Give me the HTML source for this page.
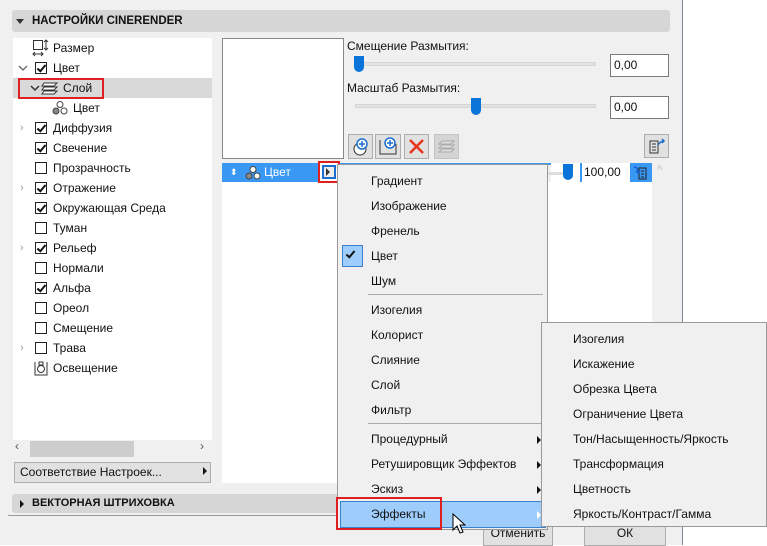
<!DOCTYPE html>
<html><head><meta charset="utf-8"><style>
*{margin:0;padding:0;box-sizing:border-box}
body{width:767px;height:545px;overflow:hidden;background:#fff;font-family:"Liberation Sans",sans-serif;font-size:12px;color:#111;position:relative}
.a{position:absolute}
.dlg{left:0;top:0;width:683px;height:545px;background:#f0f0f0;border-right:1px solid #7c8896}
.hdr{background:#d6d6d6;border-radius:3px;font-weight:bold;font-size:11.5px;line-height:22px}
.row{height:20px;line-height:20px;left:13px;width:199px}
.cb{position:absolute;left:22px;top:4px;width:12px;height:12px;border:1px solid #222;background:#fff}
.cb.k::after{content:"";position:absolute;left:3px;top:0px;width:3px;height:7px;border:solid #111;border-width:0 2px 2px 0;transform:rotate(40deg)}
.ch{position:absolute;left:7px;color:#999;font-size:11px}
.lbl{position:absolute;left:40px}
.tb{background:#fff;border:1px solid #7a7a7a;line-height:20px;padding-left:3px;font-size:12px}
.btn{border:1px solid #adadad;background:#e1e1e1}
.mi{position:absolute;left:33px;height:25px;line-height:25px}
.arr{position:absolute;left:199px;width:0;height:0;border-left:4px solid #111;border-top:4px solid transparent;border-bottom:4px solid transparent}
</style></head><body>
<div class="a dlg"></div>
<div class="a hdr" style="left:12px;top:10px;width:658px;height:22px;padding-left:20px">НАСТРОЙКИ CINERENDER</div>
<div class="a" style="left:16px;top:19px;border-top:5px solid #333;border-left:4px solid transparent;border-right:4px solid transparent"></div>

<div class="a" style="left:13px;top:38px;width:199px;height:402px;background:#fff"></div>
<div class="a" style="left:13px;top:78px;width:199px;height:20px;background:#d9d9d9"></div>
<div class="a row" style="top:38px"><svg class="a" style="left:19px;top:1px" width="18" height="18"><rect x="1.5" y="1.5" width="9" height="9" fill="none" stroke="#333"/><path d="M14 1v10M12 3l2-2 2 2M12 9l2 2 2-2M1 15h10M3 13l-2 2 2 2M9 13l2 2-2 2" stroke="#333" fill="none"/></svg><span class="lbl">Размер</span></div>
<div class="a row" style="top:58px"><svg class="a" style="left:5px;top:6px" width="10" height="10"><path d="M1 2l4 4 4-4" stroke="#666" stroke-width="1.3" fill="none"/></svg><div class="cb k"></div><span class="lbl">Цвет</span></div>
<div class="a row" style="top:78px"><svg class="a" style="left:17px;top:5px" width="10" height="10"><path d="M1 3l4 4 4-4" stroke="#333" stroke-width="1.5" fill="none"/></svg><svg class="a" style="left:28px;top:2px" width="18" height="16"><path d="M3 3h13l-3 3H1zM3 7h13l-3 3H1zM3 11h13l-3 3H1z" stroke="#333" fill="#fff"/></svg><span class="lbl" style="left:50px">Слой</span></div>
<div class="a" style="left:18px;top:78px;width:86px;height:21px;border:2px solid #e02020"></div>
<div class="a row" style="top:98px"><svg class="a" style="left:39px;top:2px" width="16" height="16"><circle cx="8" cy="4.5" r="3" fill="#fff" stroke="#444"/><circle cx="4" cy="11" r="3" fill="#888" stroke="#444"/><circle cx="12" cy="11" r="3" fill="#fff" stroke="#444"/></svg><span class="lbl" style="left:60px">Цвет</span></div>
<div class="a row" style="top:118px"><span class="ch">›</span><div class="cb k"></div><span class="lbl">Диффузия</span></div>
<div class="a row" style="top:138px"><div class="cb k"></div><span class="lbl">Свечение</span></div>
<div class="a row" style="top:158px"><div class="cb"></div><span class="lbl">Прозрачность</span></div>
<div class="a row" style="top:178px"><span class="ch">›</span><div class="cb k"></div><span class="lbl">Отражение</span></div>
<div class="a row" style="top:198px"><div class="cb k"></div><span class="lbl">Окружающая Среда</span></div>
<div class="a row" style="top:218px"><div class="cb"></div><span class="lbl">Туман</span></div>
<div class="a row" style="top:238px"><span class="ch">›</span><div class="cb k"></div><span class="lbl">Рельеф</span></div>
<div class="a row" style="top:258px"><div class="cb"></div><span class="lbl">Нормали</span></div>
<div class="a row" style="top:278px"><div class="cb k"></div><span class="lbl">Альфа</span></div>
<div class="a row" style="top:298px"><div class="cb"></div><span class="lbl">Ореол</span></div>
<div class="a row" style="top:318px"><div class="cb"></div><span class="lbl">Смещение</span></div>
<div class="a row" style="top:338px"><span class="ch">›</span><div class="cb"></div><span class="lbl">Трава</span></div>
<div class="a row" style="top:358px"><svg class="a" style="left:21px;top:2px" width="14" height="16"><path d="M1 2v13h12V2" stroke="#333" fill="none"/><circle cx="7" cy="9" r="3.5" fill="none" stroke="#333"/><rect x="5" y="2" width="4" height="3" fill="none" stroke="#333"/></svg><span class="lbl">Освещение</span></div>
<div class="a" style="left:13px;top:440px;width:199px;height:18px;background:#f0f0f0"></div>
<div class="a" style="left:30px;top:441px;width:104px;height:16px;background:#cdcdcd"></div>
<div class="a" style="left:15px;top:439px;color:#555">‹</div><div class="a" style="left:200px;top:439px;color:#555">›</div>
<div class="a btn" style="left:14px;top:462px;width:197px;height:21px;line-height:19px;padding-left:5px">Соответствие Настроек...</div>
<div class="arr" style="left:203px;top:467px"></div>

<div class="a" style="left:222px;top:38px;width:122px;height:121px;background:#fff;border:1px solid #888"></div>
<div class="a" style="left:222px;top:163px;width:430px;height:320px;background:#fff"></div>
<div class="a" style="left:222px;top:163px;width:112px;height:19px;background:#3a98f5;color:#fff;line-height:19px"><span class="a" style="left:8px;font-size:9px">⬍</span><svg class="a" style="left:23px;top:2px" width="16" height="16"><circle cx="8" cy="4.5" r="3" fill="#fff" stroke="#444"/><circle cx="4" cy="11" r="3" fill="#888" stroke="#444"/><circle cx="12" cy="11" r="3" fill="#fff" stroke="#444"/></svg><span class="a" style="left:42px">Цвет</span></div>
<div class="a" style="left:334px;top:163px;width:217px;height:19px;background:#f0f0f0;border-top:2px solid #3a98f5"></div>
<div class="a" style="left:547px;top:172px;width:23px;height:3px;background:#ddd"></div>
<div class="a" style="left:563px;top:164px;width:10px;height:16px;background:#0a74d8;border-radius:0 0 5px 5px"></div>
<div class="a" style="left:580px;top:163px;width:50px;height:19px;background:#fff;border-left:2px solid #3a98f5;line-height:19px;padding-left:2px">100,00</div>
<div class="a" style="left:630px;top:163px;width:22px;height:19px;background:#3a98f5"><svg width="22" height="19"><path d="M9 5h7v11H9zM11 8h3M11 11h3M11 14h3" stroke="#222" fill="none"/><path d="M4 4c3 0 4 2 4 5M6 8l2 2 2-2" stroke="#1a5fd0" stroke-width="1.5" fill="none"/></svg></div>
<div class="a" style="left:657px;top:164px;color:#bbb;font-size:11px">^</div>
<div class="a" style="left:318px;top:161px;width:22px;height:22px;border:2px solid #e02020;background:#fff"><div class="a" style="left:2px;top:2px;width:14px;height:14px;border:2px solid #1a6fd0;background:#eee"></div><div class="arr" style="left:6px;top:5px;border-left-color:#333"></div></div>

<div class="a" style="left:347px;top:39px">Смещение Размытия:</div>
<div class="a" style="left:355px;top:62px;width:241px;height:4px;background:#e3e3e3;border:1px solid #d6d6d6"></div>
<div class="a" style="left:354px;top:56px;width:10px;height:16px;background:#0a74d8;border-radius:0 0 5px 5px"></div>
<div class="a tb" style="left:610px;top:54px;width:59px;height:23px">0,00</div>
<div class="a" style="left:347px;top:81px">Масштаб Размытия:</div>
<div class="a" style="left:355px;top:104px;width:241px;height:4px;background:#e3e3e3;border:1px solid #d6d6d6"></div>
<div class="a" style="left:471px;top:98px;width:10px;height:17px;background:#0a74d8;border-radius:0 0 5px 5px"></div>
<div class="a tb" style="left:610px;top:96px;width:59px;height:23px">0,00</div>

<div class="a btn" style="left:348px;top:134px;width:25px;height:25px"><svg width="23" height="23"><circle cx="11" cy="14" r="6" fill="#fff" stroke="#333"/><circle cx="13" cy="9" r="5" fill="#fff" stroke="#1a6fd0" stroke-width="1.5"/><path d="M13 6v6M10 9h6" stroke="#1a6fd0" stroke-width="1.5"/></svg></div>
<div class="a btn" style="left:375px;top:134px;width:26px;height:25px"><svg width="24" height="23"><path d="M4 5v14h16V9" fill="none" stroke="#333"/><circle cx="14" cy="8" r="5" fill="#fff" stroke="#1a6fd0" stroke-width="1.5"/><path d="M14 5v6M11 8h6" stroke="#1a6fd0" stroke-width="1.5"/></svg></div>
<div class="a btn" style="left:404px;top:134px;width:25px;height:25px"><svg width="23" height="23"><path d="M5 5l13 13M18 5L5 18" stroke="#e8341c" stroke-width="2.5"/></svg></div>
<div class="a btn" style="left:434px;top:134px;width:25px;height:25px;background:#d4d4d4;border-color:#c4c4c4"><svg width="23" height="23"><path d="M7 6h12l-3 3H4zM7 10h12l-3 3H4zM7 14h12l-3 3H4z" stroke="#aaa" fill="#ddd"/></svg></div>
<div class="a btn" style="left:644px;top:134px;width:25px;height:24px"><svg width="23" height="22"><path d="M5 6h8v12H5zM7 9h4M7 12h4M7 15h4" stroke="#333" fill="none"/><path d="M13 10c2-3 4-4 6-4M17 4l2 2-2 2" stroke="#1a6fd0" stroke-width="1.5" fill="none"/></svg></div>

<div class="a hdr" style="left:12px;top:494px;width:330px;height:19px;line-height:19px;padding-left:20px;font-size:11px">ВЕКТОРНАЯ ШТРИХОВКА</div>
<div class="arr" style="left:20px;top:500px"></div>
<div class="a" style="left:8px;top:515px;width:335px;height:1px;background:#999"></div>
<div class="a btn" style="left:483px;top:520px;width:70px;height:26px;text-align:center;line-height:24px">Отменить</div>
<div class="a btn" style="left:584px;top:520px;width:82px;height:26px;text-align:center;line-height:24px">ОК</div>

<div class="a" style="left:337px;top:164px;width:211px;height:366px;background:#f0f0f0;border:1px solid #999">
<div class="mi" style="top:4px">Градиент</div>
<div class="mi" style="top:29px">Изображение</div>
<div class="mi" style="top:54px">Френель</div>
<div class="a" style="left:4px;top:80px;width:21px;height:22px;background:#9fcdfb;border:1px solid #3a80d0"></div>
<div class="a" style="left:10px;top:84px;width:5px;height:9px;border:solid #111;border-width:0 2px 2px 0;transform:rotate(40deg)"></div>
<div class="mi" style="top:79px">Цвет</div>
<div class="mi" style="top:104px">Шум</div>
<div class="a" style="left:30px;top:129px;width:175px;height:1px;background:#aaa"></div>
<div class="mi" style="top:133px">Изогелия</div>
<div class="mi" style="top:158px">Колорист</div>
<div class="mi" style="top:183px">Слияние</div>
<div class="mi" style="top:208px">Слой</div>
<div class="mi" style="top:233px">Фильтр</div>
<div class="a" style="left:30px;top:258px;width:175px;height:1px;background:#aaa"></div>
<div class="mi" style="top:262px">Процедурный</div><div class="arr" style="top:271px"></div>
<div class="mi" style="top:287px">Ретушировщик Эффектов</div><div class="arr" style="top:296px"></div>
<div class="mi" style="top:312px">Эскиз</div><div class="arr" style="top:321px"></div>
<div class="a" style="left:2px;top:336px;width:206px;height:27px;background:#9fcdfb;border:1px solid #3a80d0"></div>
<div class="mi" style="top:337px">Эффекты</div><div class="arr" style="top:346px;border-left-color:#fff"></div>
</div>
<div class="a" style="left:336px;top:497px;width:106px;height:33px;border:2px solid #e02020"></div>
<svg class="a" style="left:452px;top:513px" width="14" height="22"><path d="M1 1v16l4-4 3 7 3-1-3-7h5z" fill="#fff" stroke="#000"/></svg>

<div class="a" style="left:541px;top:322px;width:226px;height:205px;background:#f0f0f0;border:1px solid #999">
<div class="a" style="left:31px;top:4px;line-height:25px">Изогелия</div>
<div class="a" style="left:31px;top:29px;line-height:25px">Искажение</div>
<div class="a" style="left:31px;top:54px;line-height:25px">Обрезка Цвета</div>
<div class="a" style="left:31px;top:79px;line-height:25px">Ограничение Цвета</div>
<div class="a" style="left:31px;top:104px;line-height:25px">Тон/Насыщенность/Яркость</div>
<div class="a" style="left:31px;top:129px;line-height:25px">Трансформация</div>
<div class="a" style="left:31px;top:154px;line-height:25px">Цветность</div>
<div class="a" style="left:31px;top:179px;line-height:25px">Яркость/Контраст/Гамма</div>
</div>
</body></html>
